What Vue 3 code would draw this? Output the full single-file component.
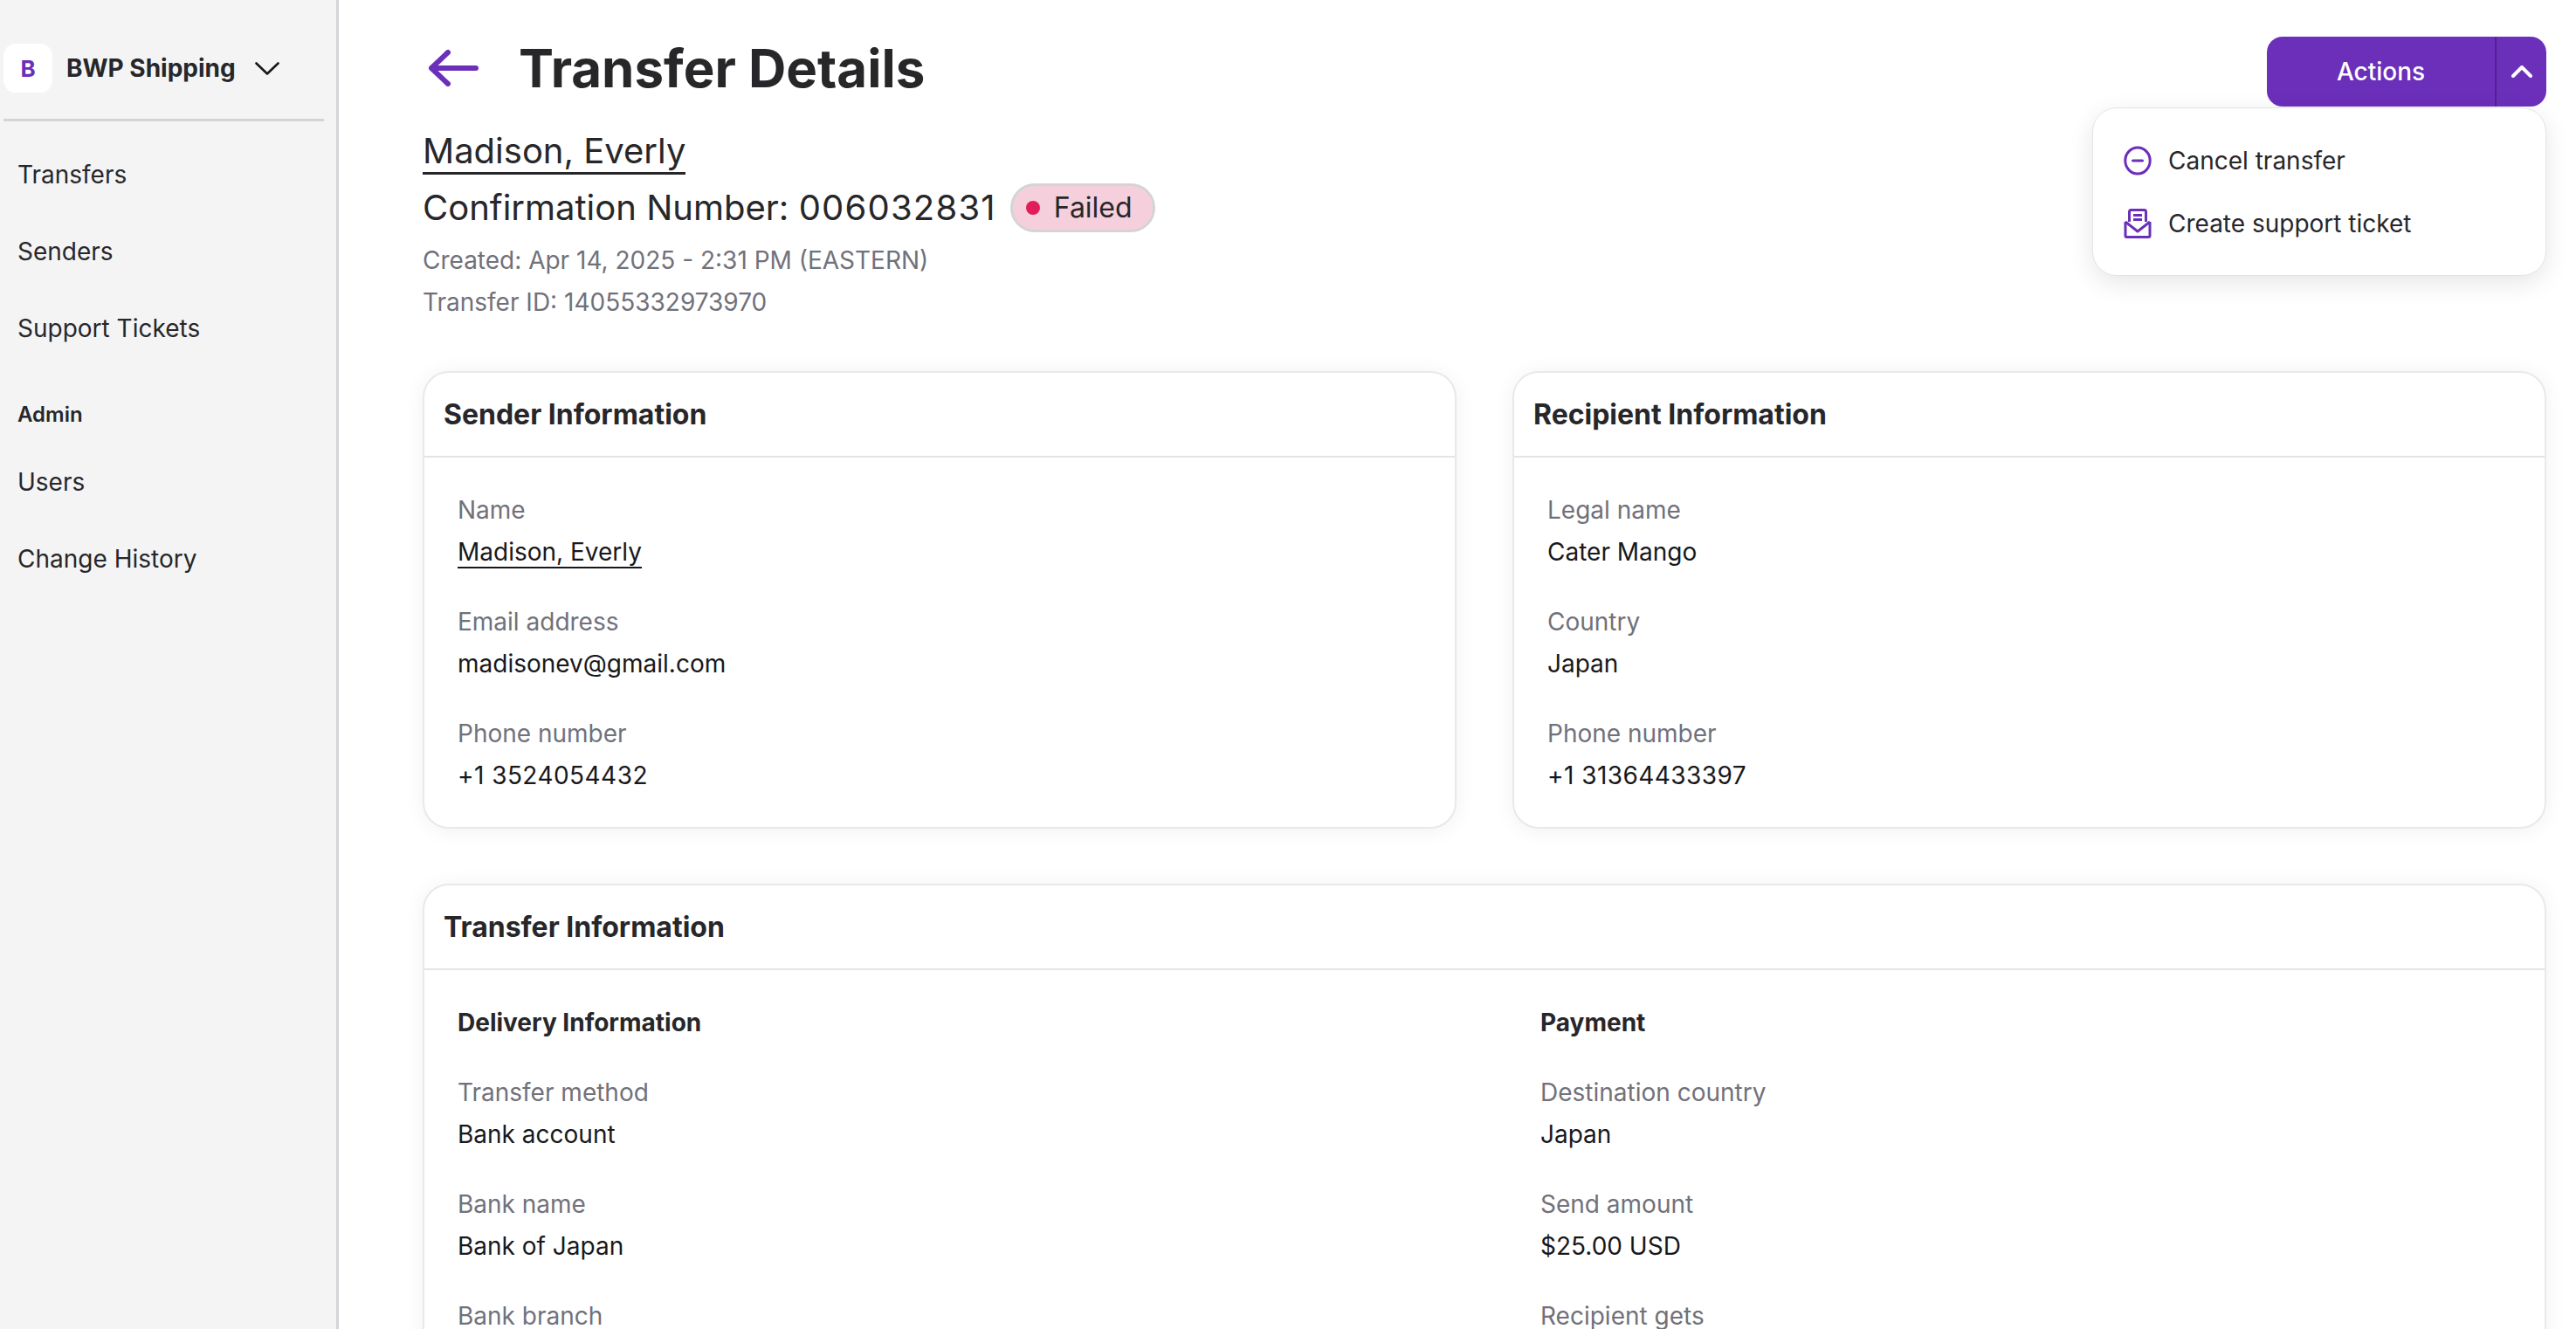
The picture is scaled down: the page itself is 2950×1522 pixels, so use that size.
<script setup>
const navItems = ['Transfers', 'Senders', 'Support Tickets']
const adminItems = ['Users', 'Change History']

const senderFields = [
  { label: 'Name', value: 'Madison, Everly', link: true },
  { label: 'Email address', value: 'madisonev@gmail.com' },
  { label: 'Phone number', value: '+1 3524054432', phone: true },
]
const recipientFields = [
  { label: 'Legal name', value: 'Cater Mango' },
  { label: 'Country', value: 'Japan' },
  { label: 'Phone number', value: '+1 31364433397', phone: true },
]
const deliveryFields = [
  { label: 'Transfer method', value: 'Bank account' },
  { label: 'Bank name', value: 'Bank of Japan' },
  { label: 'Bank branch', value: '' },
]
const paymentFields = [
  { label: 'Destination country', value: 'Japan' },
  { label: 'Send amount', value: '$25.00 USD' },
  { label: 'Recipient gets', value: '' },
]
</script>

<template>
  <div class="app">
    <aside class="sidebar">
      <div class="brand">
        <span class="brand-logo">B</span>
        <span class="brand-name">BWP Shipping</span>
        <svg class="brand-chevron" viewBox="0 0 28 15" fill="none">
          <path d="M1.5 1.5 14 13.500 26.500 1.500" stroke="#18181b" stroke-width="2.6" stroke-linecap="round" stroke-linejoin="round" />
        </svg>
      </div>
      <nav class="nav">
        <a v-for="item in navItems" :key="item" class="nav-item">{{ item }}</a>
        <div class="nav-heading">Admin</div>
        <a v-for="item in adminItems" :key="item" class="nav-item">{{ item }}</a>
      </nav>
    </aside>

    <main class="content">
      <header class="page-header">
        <div class="title-wrap">
          <svg class="back-arrow" viewBox="0 0 58 42" fill="none">
            <path d="M54 21H3M22 3 3 21l19 18" stroke="#6b2fba" stroke-width="6" stroke-linecap="round" stroke-linejoin="round" />
          </svg>
          <h1>Transfer Details</h1>
        </div>
        <div class="actions">
          <div class="actions-btn">
            <span class="actions-label">Actions</span>
            <span class="actions-toggle">
              <svg viewBox="0 0 24 14" width="24" height="14" fill="none">
                <path d="M2 12 12 2l10 10" stroke="#fff" stroke-width="4" stroke-linecap="round" stroke-linejoin="round" />
              </svg>
            </span>
          </div>
          <div class="menu">
            <div class="menu-item">
              <svg viewBox="0 0 32 34" width="32" height="34" fill="none">
                <ellipse cx="16" cy="17" rx="14.2" ry="15" stroke="#6b2fba" stroke-width="3" />
                <path d="M10.500 17h11" stroke="#6b2fba" stroke-width="3" stroke-linecap="round" />
              </svg>
              Cancel transfer
            </div>
            <div class="menu-item">
              <svg viewBox="0 0 32 34" width="32" height="34" fill="none">
                <path d="M6.500 15V3.500a2 2 0 0 1 2-2h15a2 2 0 0 1 2 2V15" stroke="#6b2fba" stroke-width="3" />
                <path d="M11 7.500h10M11 12.500h10" stroke="#6b2fba" stroke-width="3" />
                <path d="M2 15v16a1.500 1.500 0 0 0 1.500 1.500h25A1.500 1.500 0 0 0 30 31V15" stroke="#6b2fba" stroke-width="3" />
                <path d="M2 15l14 11 14-11" stroke="#6b2fba" stroke-width="3" stroke-linejoin="round" />
              </svg>
              Create support ticket
            </div>
          </div>
        </div>
      </header>

      <section class="summary">
        <a class="sender-link">Madison, Everly</a>
        <div class="confirmation">
          <span>Confirmation Number: <span class="conf-number">006032831</span></span>
          <span class="badge"><i class="badge-dot"></i>Failed</span>
        </div>
        <div class="meta">Created: Apr 14, 2025 - 2:31 PM (EASTERN)</div>
        <div class="meta">Transfer ID: 14055332973970</div>
      </section>

      <div class="card-row">
        <section class="card">
          <h2 class="card-title">Sender Information</h2>
          <div class="card-body">
            <div v-for="f in senderFields" :key="f.label" class="field">
              <div class="field-label">{{ f.label }}</div>
              <div class="field-value" :class="{ phone: f.phone }"><span :class="{ underlined: f.link }">{{ f.value }}</span></div>
            </div>
          </div>
        </section>
        <section class="card">
          <h2 class="card-title">Recipient Information</h2>
          <div class="card-body">
            <div v-for="f in recipientFields" :key="f.label" class="field">
              <div class="field-label">{{ f.label }}</div>
              <div class="field-value" :class="{ phone: f.phone }">{{ f.value }}</div>
            </div>
          </div>
        </section>
      </div>

      <section class="card transfer-card">
        <h2 class="card-title">Transfer Information</h2>
        <div class="card-body transfer-body">
          <div>
            <h3 class="group-title">Delivery Information</h3>
            <div v-for="f in deliveryFields" :key="f.label" class="field">
              <div class="field-label">{{ f.label }}</div>
              <div class="field-value">{{ f.value }}</div>
            </div>
          </div>
          <div>
            <h3 class="group-title">Payment</h3>
            <div v-for="f in paymentFields" :key="f.label" class="field">
              <div class="field-label">{{ f.label }}</div>
              <div class="field-value">{{ f.value }}</div>
            </div>
          </div>
        </div>
      </section>
    </main>
  </div>
</template>

<style scoped>
.app {
  display: flex;
  height: 100vh;
  overflow: hidden;
  background: #fff;
  color: #27272a;
  font-family: Inter, "Noto Sans", sans-serif;
  font-size: 28px;
}

/* sidebar */
.sidebar {
  flex: none;
  width: 388px;
  box-sizing: border-box;
  padding: 50px 14px 0 4px;
  background: #f4f4f5;
  border-right: 3px solid #d4d4d8;
}
.brand {
  display: flex;
  align-items: center;
  height: 56px;
  padding-bottom: 30px;
  border-bottom: 3px solid #d4d4d8;
}
.brand-logo {
  flex: none;
  width: 56px;
  height: 56px;
  display: flex;
  align-items: center;
  justify-content: center;
  background: #fff;
  border-radius: 14px;
  color: #6b2fba;
  font-size: 26px;
  font-weight: 700;
}
.brand-name {
  margin-left: 16px;
  font-size: 28px;
  font-weight: 650;
}
.brand-chevron {
  width: 28px;
  height: 15px;
  margin-left: 22px;
}
.nav {
  display: flex;
  flex-direction: column;
  padding: 17px 0 0 16px;
}
.nav-item {
  display: flex;
  align-items: center;
  height: 88px;
}
.nav-heading {
  margin-top: 39px;
  margin-bottom: 17px;
  height: 32px;
  line-height: 32px;
  font-size: 24px;
  font-weight: 600;
}

/* main */
.content {
  flex: 1;
  min-width: 0;
  padding: 42px 34px 0 96px;
}
.page-header {
  display: flex;
  justify-content: space-between;
  align-items: flex-start;
  height: 80px;
}
.title-wrap {
  display: flex;
  align-items: center;
  height: 72px;
}
.back-arrow {
  width: 58px;
  height: 42px;
  margin: 0 45px 0 7px;
}
h1 {
  margin: 0;
  font-size: 60px;
  font-weight: 700;
}
.actions {
  position: relative;
}
.actions-btn {
  display: flex;
  width: 320px;
  height: 80px;
  background: #6b2fba;
  border-radius: 18px;
  color: #fff;
  font-weight: 500;
}
.actions-label {
  flex: 1;
  display: flex;
  align-items: center;
  justify-content: center;
}
.actions-toggle {
  flex: none;
  width: 57px;
  display: flex;
  align-items: center;
  justify-content: center;
  border-left: 2px solid #54238f;
}
.menu {
  position: absolute;
  top: 81px;
  right: 0;
  z-index: 5;
  width: 520px;
  height: 193px;
  box-sizing: border-box;
  padding: 24px 34px 0 35px;
  background: #fff;
  border: 1px solid #e4e4e7;
  border-radius: 28px;
  box-shadow: 0 8px 28px rgba(0, 0, 0, 0.1);
}
.menu-item {
  display: flex;
  align-items: center;
  gap: 19px;
  height: 72px;
}

.summary {
  margin-top: 27px;
}
.sender-link {
  display: inline-block;
  font-size: 40px;
  line-height: 48px;
  border-bottom: 3px solid #27272a;
}
.confirmation {
  display: flex;
  align-items: center;
  gap: 16px;
  margin-top: 10px;
  font-size: 40px;
  line-height: 56px;
}
.conf-number {
  letter-spacing: 1.2px;
}
.badge {
  display: flex;
  align-items: center;
  gap: 16px;
  height: 56px;
  box-sizing: border-box;
  padding: 0 23px 0 15px;
  background: #f5d0dc;
  border: 3px solid #d4d4d8;
  border-radius: 28px;
  font-size: 32px;
}
.badge-dot {
  width: 16px;
  height: 16px;
  border-radius: 50%;
  background: #e11d5c;
}
.meta {
  margin-top: 16px;
  color: #71717a;
  line-height: 32px;
}

/* cards */
.card-row {
  display: grid;
  grid-template-columns: 1fr 1fr;
  gap: 64px;
  margin-top: 63px;
}
.card {
  background: #fff;
  border: 2px solid #e9e9eb;
  border-radius: 30px;
  box-shadow: 0 2px 24px rgba(0, 0, 0, 0.06);
}
.card-title {
  margin: 0;
  height: 97px;
  box-sizing: border-box;
  padding: 28px 22px 0;
  border-bottom: 2px solid #e4e4e7;
  font-size: 32px;
  line-height: 40px;
  font-weight: 700;
}
.card-body {
  padding: 44px 38px 43px;
}
.field {
  margin-bottom: 48px;
}
.field-label {
  height: 32px;
  line-height: 32px;
  color: #71717a;
}
.field-value {
  margin-top: 16px;
  height: 32px;
  line-height: 32px;
  color: #18181b;
}
.field-value.phone {
  letter-spacing: 0.45px;
}
.card-body .field:last-child {
  margin-bottom: 0;
}
.underlined {
  border-bottom: 2px solid #18181b;
}
.transfer-card {
  margin-top: 63px;
}
.transfer-body {
  display: grid;
  grid-template-columns: 1fr 1fr;
  gap: 128px;
}
.group-title {
  margin: 0 0 48px;
  font-size: 28px;
  line-height: 32px;
  font-weight: 700;
}
</style>

<style>
html,
body {
  margin: 0;
  overflow: hidden;
}
</style>
